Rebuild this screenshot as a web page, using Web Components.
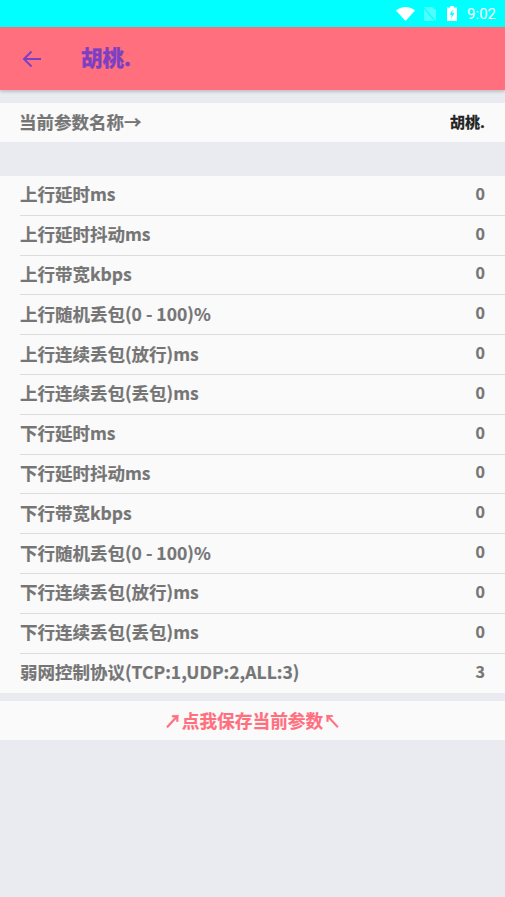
<!DOCTYPE html>
<html lang="zh">
<head>
<meta charset="utf-8">
<title>胡桃.</title>
<style>
html, body { margin: 0; padding: 0; background: #e9ebf1; }
body { width: 505px; height: 897px; overflow: hidden; font-family: "Noto Sans CJK SC", "Noto Sans", sans-serif; }
</style>
</head>
<body>
<app-status-bar></app-status-bar>
<app-title-bar>胡桃.</app-title-bar>
<param-group style="margin-top:13px">
    <param-row value="胡桃." strong>当前参数名称→</param-row>
</param-group>
<param-group style="margin-top:34px">
    <param-row value="0">上行延时ms</param-row>
    <param-row value="0">上行延时抖动ms</param-row>
    <param-row value="0">上行带宽kbps</param-row>
    <param-row value="0">上行随机丢包(0 - 100)%</param-row>
    <param-row value="0">上行连续丢包(放行)ms</param-row>
    <param-row value="0">上行连续丢包(丢包)ms</param-row>
    <param-row value="0">下行延时ms</param-row>
    <param-row value="0">下行延时抖动ms</param-row>
    <param-row value="0">下行带宽kbps</param-row>
    <param-row value="0">下行随机丢包(0 - 100)%</param-row>
    <param-row value="0">下行连续丢包(放行)ms</param-row>
    <param-row value="0">下行连续丢包(丢包)ms</param-row>
    <param-row value="3" last>弱网控制协议(TCP:1,UDP:2,ALL:3)</param-row>
</param-group>
<save-button>↗点我保存当前参数↖</save-button>

<script>
/**
 * Android status bar
 */
class AppStatusBar extends HTMLElement {
    connectedCallback() {
        this.attachShadow({ mode: 'open' });
        this.shadowRoot.innerHTML = `
            <style>
                :host { display: flex; align-items: center; justify-content: flex-end; height: 27px; background: #00ffff; color: #fff; }
                .wifi { width: 19px; height: 14px; margin-right: 9px; }
                .sim { width: 12px; height: 14px; margin-right: 11px; }
                .battery { width: 10px; height: 15px; margin-right: 10px; }
                .time { font: 15px Roboto, sans-serif; margin-right: 9px; }
            </style>
            <svg class="wifi" viewBox="0 0 20 14" preserveAspectRatio="none"><path d="M0 3.600C2.700 1.300 6.200 0 10 0s7.300 1.300 10 3.600L10 14z" fill="#fff"/></svg>
            <svg class="sim" viewBox="0 0 12 14"><path d="M0 0h8l4 3v11H0z" fill="#fff" opacity=".3"/><path d="M0 1l11 13" stroke="#00ffff" stroke-width="1.200"/></svg>
            <svg class="battery" viewBox="0 0 11 16" preserveAspectRatio="none"><path d="M3.500 0h4v1.500H11V16H0V1.500h3.500z" fill="#fff"/><path d="M6.300 3.500L3 9.300h2.200L4.600 13.500 8 7.500H5.700z" fill="#00ffff"/></svg>
            <span class="time">9:02</span>
        `;
    }
}

/**
 * Pink title bar with back arrow
 */
class AppTitleBar extends HTMLElement {
    connectedCallback() {
        this.attachShadow({ mode: 'open' });
        this.shadowRoot.innerHTML = `
            <style>
                :host { display: flex; align-items: center; height: 63px; background: #ff6f7d; color: #7b3fc4; box-shadow: 0 2px 3px rgba(0,0,0,.18); position: relative; }
                svg { width: 20px; height: 18px; margin-left: 22px; }
                .title { margin-left: 39px; margin-bottom: 4px; font-size: 21.500px; font-weight: 700; line-height: 28px; -webkit-text-stroke: .5px currentColor; }
            </style>
            <svg viewBox="0 0 20 18" fill="none" stroke="currentColor" stroke-width="2"><path d="M19 9H2M9.500 1.500L2 9l7.500 7.500"/></svg>
            <span class="title"><slot></slot></span>
        `;
    }
}

class ParamGroup extends HTMLElement {
    connectedCallback() {
        this.attachShadow({ mode: 'open' });
        this.shadowRoot.innerHTML = `
            <style>
                :host { display: flex; flex-direction: column; background: #fafafa; }
            </style>
            <slot></slot>
        `;
    }
}

/**
 * One row: label on the left, value on the right
 */
class ParamRow extends HTMLElement {
    connectedCallback() {
        const value = this.getAttribute('value') ?? '';
        this.attachShadow({ mode: 'open' });
        this.shadowRoot.innerHTML = `
            <style>
                :host { display: block; padding-left: 20px; color: #757575; font-size: 17.500px; font-weight: 700; -webkit-text-stroke: .2px currentColor; }
                :host([strong]) { padding-left: 19px; }
                .row { display: flex; align-items: center; justify-content: space-between; box-sizing: border-box; height: 39.800px; padding: 0 20px 3px 0; border-bottom: 1px solid #dcdcdc; }
                :host([last]) .row { border-bottom: 0; }
                :host([strong]) .row { border-bottom: 0; height: 39px; padding-bottom: 2px; }
                :host([strong]) .value { margin-bottom: 0; color: #222; font-size: 15px; -webkit-text-stroke: .3px #222; }
                .value { margin-bottom: 2px; font-size: 16px; }
            </style>
            <div class="row"><span><slot></slot></span><span class="value">${value}</span></div>
        `;
    }
}

class SaveButton extends HTMLElement {
    connectedCallback() {
        this.attachShadow({ mode: 'open' });
        this.shadowRoot.innerHTML = `
            <style>
                :host { display: flex; align-items: center; justify-content: center; box-sizing: border-box; height: 39px; margin-top: 8px; padding-bottom: 2px; background: #fafafa; color: #ff6f7d; font-size: 17.700px; font-weight: 700; -webkit-text-stroke: .2px currentColor; }
            </style>
            <slot></slot>
        `;
    }
}

customElements.define('app-status-bar', AppStatusBar);
customElements.define('app-title-bar', AppTitleBar);
customElements.define('param-group', ParamGroup);
customElements.define('param-row', ParamRow);
customElements.define('save-button', SaveButton);
</script>
</body>
</html>
